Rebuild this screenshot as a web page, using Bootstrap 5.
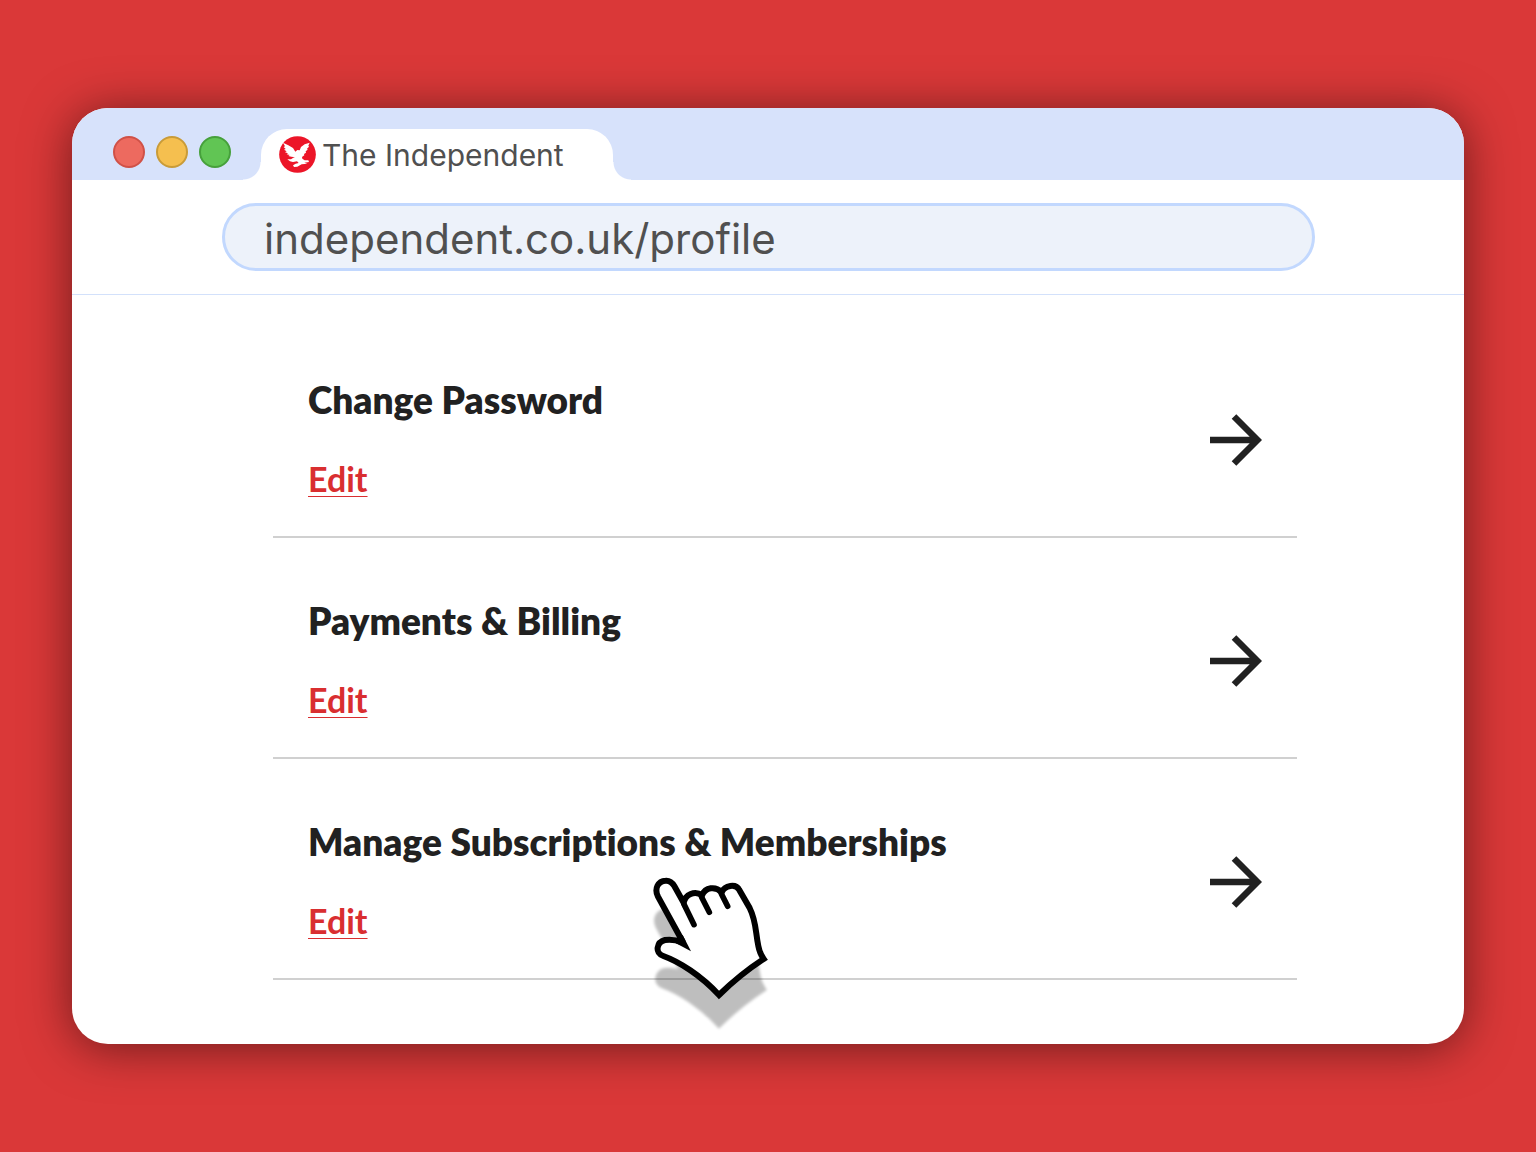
<!DOCTYPE html>
<html lang="en">
<head>
<meta charset="utf-8">
<meta name="viewport" content="width=device-width, initial-scale=1">
<title>The Independent</title>
<link href="https://cdn.jsdelivr.net/npm/bootstrap@5.3.0/dist/css/bootstrap.min.css" rel="stylesheet">
<style>
body { background: #da3838; font-family: Inter, sans-serif; padding: 108px 72px; }
.browser { border-radius: 36px; box-shadow: 0 4px 48px rgba(0,0,0,.5); }
.titlebar { background: #d7e2fb; border-radius: 36px 36px 0 0; height: 72px; padding-left: 41px; }
.lights { gap: 11px; margin-right: 30px; padding-bottom: 12px; }
.light { width: 32px; height: 32px; padding: 0; border: 2px solid; border-radius: 50%; }
.light-close { background: #ed6a5f; border-color: #d05147; }
.light-min { background: #f5bf4f; border-color: #c99b38; }
.light-max { background: #61c554; border-color: #46a03b; }
.tab { position: relative; background: #fff; border-radius: 26px 26px 0 0; height: 51px; width: 352px; padding-left: 18px; color: #505050; font-size: 30px; line-height: 36px; gap: 6px; }
.tab::before, .tab::after { content: ""; position: absolute; bottom: 0; width: 18px; height: 18px; }
.tab::before { right: 100%; background: radial-gradient(circle at 0 0, transparent 17px, #fff 18px); }
.tab::after { left: 100%; background: radial-gradient(circle at 100% 0, transparent 17px, #fff 18px); }
.addressbar { padding: 23px 149px 23px 150px; border-bottom: 1px solid #d3e1fb; }
.address { height: 68px; padding: 3px 39px 0; border: 3px solid #c2d8fe; border-radius: 34px; background: #edf2fa; color: #505050; font-size: 42px; line-height: 52px; }
.settings { padding: 22px 167px 64px 201px; font-family: Lato, sans-serif; font-variant-ligatures: none; }
.setting { position: relative; border-bottom: 2px solid #d0d0d0; padding: 57px 35px 35px; }
.setting-title { color: #212121; font-size: 37px; line-height: 52px; font-weight: 800; margin-bottom: 31px; }
.edit { color: #d92e30; font-size: 34px; line-height: 44px; font-weight: 700; text-decoration: underline; text-decoration-thickness: 1px; text-underline-offset: 4px; text-decoration-skip-ink: none; }
.edit:hover { color: #a91f21; }
.go { padding-top: 4px; }
.hand { position: absolute; left: 367px; top: 101px; pointer-events: none; }
</style>
<script src="https://cdn.jsdelivr.net/npm/bootstrap@5.3.0/dist/js/bootstrap.bundle.min.js"></script>
</head>
<body class="min-vh-100">
<div class="browser bg-white">
  <header>
    <div class="titlebar d-flex align-items-end">
      <div class="lights d-flex">
        <button type="button" class="light light-close" aria-label="Close"></button>
        <button type="button" class="light light-min" aria-label="Minimise"></button>
        <button type="button" class="light light-max" aria-label="Maximise"></button>
      </div>
      <div class="tab d-flex align-items-center">
        <svg width="37" height="37" viewBox="657 138 111 111" aria-hidden="true">
          <circle cx="712.500" cy="193.500" r="55" fill="#ec1528"/>
          <path fill="#fff" d="M669 158L685 166L699 174L706 185L712 180L719 181L723 171L734 163L749 158L745 167L747 170L741 176L743 179L737 184L738 188L732 192L733 196L726 201L727 206L734 211L745 211L747 216L733 218L742 221L725 223L712 230L702 231L699 226L707 221L716 219L711 214L699 216L690 214L682 208L693 208L700 203L705 202L694 200L685 198L689 195L680 193L684 190L675 187L680 184L672 179L677 177L671 171L675 169Z"/>
        </svg>
        <span>The Independent</span>
      </div>
    </div>
    <div class="addressbar">
      <input class="address w-100 d-block" type="text" value="independent.co.uk/profile" aria-label="Address">
    </div>
  </header>
  <main class="settings">
    <section class="setting d-flex align-items-center justify-content-between">
      <div>
        <h2 class="setting-title">Change Password</h2>
        <a class="edit d-inline-block" href="#password">Edit</a>
      </div>
      <a class="go" href="#password" aria-label="Open Change Password">
        <svg class="d-block" width="52" height="52" viewBox="0 0 52 52" fill="none" stroke="#212121" stroke-width="6.500"><path d="M0 26H47M24 2.500L47.500 26L24 49.500"/></svg>
      </a>
    </section>
    <section class="setting d-flex align-items-center justify-content-between">
      <div>
        <h2 class="setting-title">Payments &amp; Billing</h2>
        <a class="edit d-inline-block" href="#billing">Edit</a>
      </div>
      <a class="go" href="#billing" aria-label="Open Payments &amp; Billing">
        <svg class="d-block" width="52" height="52" viewBox="0 0 52 52" fill="none" stroke="#212121" stroke-width="6.500"><path d="M0 26H47M24 2.500L47.500 26L24 49.500"/></svg>
      </a>
    </section>
    <section class="setting d-flex align-items-center justify-content-between">
      <div>
        <h2 class="setting-title">Manage Subscriptions &amp; Memberships</h2>
        <a class="edit d-inline-block" href="#subscriptions">Edit</a>
      </div>
      <a class="go" href="#subscriptions" aria-label="Open Manage Subscriptions &amp; Memberships">
        <svg class="d-block" width="52" height="52" viewBox="0 0 52 52" fill="none" stroke="#212121" stroke-width="6.500"><path d="M0 26H47M24 2.500L47.500 26L24 49.500"/></svg>
      </a>
      <svg class="hand" width="150" height="180" viewBox="0 0 450 540" aria-hidden="true">
        <defs>
          <filter id="soft" x="-20%" y="-20%" width="140%" height="140%"><feGaussianBlur stdDeviation="5"/></filter>
          <path id="palm" d="M127 243L54 110C42 86 54 63 77 62C90 61 97 68 103 78L131 128C136 104 164 90 186 106C196 82 226 77 245 97C254 75 288 70 298 90L329 144C349 184 346 215 355 258Q359 280 371 297C325 327 278 365 237 405C183 346 117 305 70 288C43 279 50 246 75 240Q99 236 127 247Z"/>
        </defs>
        <use href="#palm" y="91" fill="#000" stroke="#000" stroke-width="14" opacity=".25" filter="url(#soft)"/>
        <use href="#palm" fill="#fff" stroke="#000" stroke-width="18" stroke-linejoin="miter" stroke-miterlimit="3"/>
        <path d="M115 232L128 225L153 274L105 248Z"/>
        <path d="M132 133L162 194M185 112L208 157M244 101L263 139" fill="none" stroke="#000" stroke-width="17" stroke-linecap="round"/>
      </svg>
    </section>
  </main>
</div>
</body>
</html>
